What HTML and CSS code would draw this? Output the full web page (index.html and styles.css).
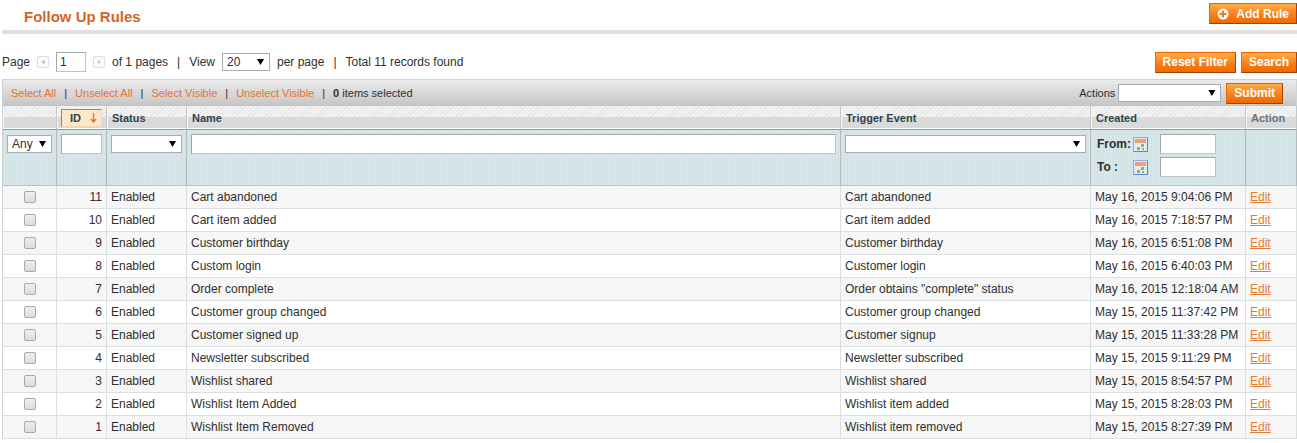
FILE: index.html
```html
<!DOCTYPE html>
<html lang="en">
<head>
    <meta charset="UTF-8">
    <meta name="viewport" content="width=device-width, initial-scale=1.0">
    <title>Follow Up Rules</title>
    <link rel="stylesheet" href="styles.css">
</head>
<body>
    <header class="content-header">
        <h1>Follow Up Rules</h1>
        <button type="button" class="button add">
            <svg width="12" height="12" viewBox="0 0 12 12" aria-hidden="true">
                <circle cx="6" cy="6" r="5.5" fill="#fff"/>
                <path d="M6 2.5v7M2.5 6h7" stroke="#f27a1c" stroke-width="2"/>
            </svg>
            Add Rule
        </button>
    </header>

    <div class="toolbar">
        <div class="pager">
            <label for="page">Page</label>
            <button type="button" class="arrow prev" aria-label="Previous page" disabled></button>
            <input type="text" id="page" class="page-input" value="1">
            <button type="button" class="arrow next" aria-label="Next page" disabled></button>
            <span class="pages">of 1 pages</span>
            <span class="separator">|</span>
            <label for="limit">View</label>
            <span class="select limit"><select id="limit"><option>20</option><option>30</option><option>50</option></select></span>
            <span>per page</span>
            <span class="separator last">|</span>
            <span>Total 11 records found</span>
        </div>
        <div class="filter-actions">
            <button type="button" class="button">Reset Filter</button>
            <button type="button" class="button">Search</button>
        </div>
    </div>

    <div class="massaction">
        <div class="mass-links">
            <a href="#">Select All</a>
            <span>|</span>
            <a href="#">Unselect All</a>
            <span>|</span>
            <a href="#">Select Visible</a>
            <span>|</span>
            <a href="#">Unselect Visible</a>
            <span>|</span>
            <span class="selected"><b>0</b> items selected</span>
        </div>
        <div class="mass-submit">
            <label for="actions">Actions</label>
            <span class="select actions"><select id="actions"><option></option><option>Delete</option></select></span>
            <button type="button" class="button">Submit</button>
        </div>
    </div>

    <table class="grid">
        <colgroup>
            <col class="col-check">
            <col class="col-id">
            <col class="col-status">
            <col class="col-name">
            <col class="col-event">
            <col class="col-created">
            <col class="col-action">
        </colgroup>
        <thead>
            <tr class="headings">
                <th></th>
                <th class="sorted"><a href="#">ID
                    <svg width="7" height="10" viewBox="0 0 7 10" aria-hidden="true"><path d="M3.5 0v9M1 6l2.5 3L6 6" fill="none" stroke="#e2711d" stroke-width="1.3"/></svg></a></th>
                <th>Status</th>
                <th>Name</th>
                <th>Trigger Event</th>
                <th>Created</th>
                <th class="no-link">Action</th>
            </tr>
            <tr class="filter">
                <td><span class="select"><select aria-label="Selected"><option>Any</option><option>Yes</option><option>No</option></select></span></td>
                <td><input type="text" aria-label="ID"></td>
                <td><span class="select"><select aria-label="Status"><option></option><option>Enabled</option><option>Disabled</option></select></span></td>
                <td><input type="text" aria-label="Name"></td>
                <td><span class="select"><select aria-label="Trigger Event"><option></option><option>Cart abandoned</option></select></span></td>
                <td>
                    <div class="range">
                        <label for="from">From:</label>
                        <svg width="15" height="15" viewBox="0 0 15 15" aria-hidden="true">
                            <rect x=".5" y=".5" width="14" height="14" fill="#dde8f8" stroke="#8fabdf"/>
                            <path d="M14.5 1v13.500H1" fill="none" stroke="#5c84cd"/>
                            <rect x="2" y="2" width="11" height="4" fill="#f0a070"/>
                            <rect x="3" y="6" width="9" height="7" fill="#e9eee6"/>
                            <path d="M8 7h3v3H8zM4 10h3v3H4zM9 11h2v2H9z" fill="#7fb58a"/>
                        </svg>
                        <input type="text" id="from">
                    </div>
                    <div class="range">
                        <label for="to">To :</label>
                        <svg width="15" height="15" viewBox="0 0 15 15" aria-hidden="true">
                            <rect x=".5" y=".5" width="14" height="14" fill="#dde8f8" stroke="#8fabdf"/>
                            <path d="M14.5 1v13.500H1" fill="none" stroke="#5c84cd"/>
                            <rect x="2" y="2" width="11" height="4" fill="#f0a070"/>
                            <rect x="3" y="6" width="9" height="7" fill="#e9eee6"/>
                            <path d="M8 7h3v3H8zM4 10h3v3H4zM9 11h2v2H9z" fill="#7fb58a"/>
                        </svg>
                        <input type="text" id="to">
                    </div>
                </td>
                <td></td>
            </tr>
        </thead>
        <tbody>
            <tr><td><input type="checkbox" aria-label="Rule 11"></td><td>11</td><td>Enabled</td><td>Cart abandoned</td><td>Cart abandoned</td><td>May 16, 2015 9:04:06 PM</td><td><a href="#">Edit</a></td></tr>
            <tr><td><input type="checkbox" aria-label="Rule 10"></td><td>10</td><td>Enabled</td><td>Cart item added</td><td>Cart item added</td><td>May 16, 2015 7:18:57 PM</td><td><a href="#">Edit</a></td></tr>
            <tr><td><input type="checkbox" aria-label="Rule 9"></td><td>9</td><td>Enabled</td><td>Customer birthday</td><td>Customer birthday</td><td>May 16, 2015 6:51:08 PM</td><td><a href="#">Edit</a></td></tr>
            <tr><td><input type="checkbox" aria-label="Rule 8"></td><td>8</td><td>Enabled</td><td>Custom login</td><td>Customer login</td><td>May 16, 2015 6:40:03 PM</td><td><a href="#">Edit</a></td></tr>
            <tr><td><input type="checkbox" aria-label="Rule 7"></td><td>7</td><td>Enabled</td><td>Order complete</td><td>Order obtains "complete" status</td><td>May 16, 2015 12:18:04 AM</td><td><a href="#">Edit</a></td></tr>
            <tr><td><input type="checkbox" aria-label="Rule 6"></td><td>6</td><td>Enabled</td><td>Customer group changed</td><td>Customer group changed</td><td>May 15, 2015 11:37:42 PM</td><td><a href="#">Edit</a></td></tr>
            <tr><td><input type="checkbox" aria-label="Rule 5"></td><td>5</td><td>Enabled</td><td>Customer signed up</td><td>Customer signup</td><td>May 15, 2015 11:33:28 PM</td><td><a href="#">Edit</a></td></tr>
            <tr><td><input type="checkbox" aria-label="Rule 4"></td><td>4</td><td>Enabled</td><td>Newsletter subscribed</td><td>Newsletter subscribed</td><td>May 15, 2015 9:11:29 PM</td><td><a href="#">Edit</a></td></tr>
            <tr><td><input type="checkbox" aria-label="Rule 3"></td><td>3</td><td>Enabled</td><td>Wishlist shared</td><td>Wishlist shared</td><td>May 15, 2015 8:54:57 PM</td><td><a href="#">Edit</a></td></tr>
            <tr><td><input type="checkbox" aria-label="Rule 2"></td><td>2</td><td>Enabled</td><td>Wishlist Item Added</td><td>Wishlist item added</td><td>May 15, 2015 8:28:03 PM</td><td><a href="#">Edit</a></td></tr>
            <tr><td><input type="checkbox" aria-label="Rule 1"></td><td>1</td><td>Enabled</td><td>Wishlist Item Removed</td><td>Wishlist item removed</td><td>May 15, 2015 8:27:39 PM</td><td><a href="#">Edit</a></td></tr>
        </tbody>
    </table>
</body>
</html>
```

FILE: styles.css
```css
* {
    box-sizing: border-box;
}
body {
    margin: 0;
    padding-left: 2px;
    background-color: #fff;
    color: #2f2f2f;
    font-family: "Liberation Sans", Arial, sans-serif;
    font-size: 12px;
    line-height: 16px;
}
input, select, button {
    margin: 0;
    font-family: inherit;
    font-size: 12px;
    color: inherit;
}
.content-header {
    display: flex;
    justify-content: space-between;
    align-items: flex-start;
    height: 34px;
    padding-top: 3px;
    border-bottom: 4px solid #dfdfdf;
}
.content-header h1 {
    margin: 4px 0 0 22px;
    color: #d5651f;
    font-size: 15px;
    line-height: 20px;
}
.button {
    height: 21px;
    padding: 0 7px;
    border: 1px solid;
    border-color: #ed6502 #a04300 #a04300 #ed6502;
    background: linear-gradient(#ffac47, #f77c16 60%, #ee6a00);
    color: #fff;
    font-weight: bold;
    line-height: 18px;
    white-space: nowrap;
    cursor: pointer;
}
.button.add {
    display: flex;
    align-items: center;
    gap: 7px;
}

/* pager and filter buttons */
.toolbar {
    display: flex;
    justify-content: space-between;
    align-items: center;
    height: 45px;
    padding-top: 11px;
}
.pager {
    display: flex;
    align-items: center;
    gap: 7px;
}
.arrow {
    display: flex;
    align-items: center;
    justify-content: center;
    width: 12px;
    height: 12px;
    padding: 0;
    border: 1px solid #ddd;
    border-radius: 2px;
    background-color: #fafafa;
}
.arrow::before {
    content: "";
    width: 3px;
    height: 5px;
    background-color: #bbb;
    clip-path: polygon(0 50%, 100% 0, 100% 100%);
}
.arrow.next::before {
    clip-path: polygon(100% 50%, 0 0, 0 100%);
}
.page-input {
    width: 30px;
}
.separator {
    padding: 0 2px;
}
input[type="text"] {
    height: 20px;
    padding: 0 3px;
    border: 1px solid;
    border-color: #a2a8a8 #bcc4c4 #bcc4c4 #a2a8a8;
    background-color: #fff;
}
.select {
    display: block;
    position: relative;
}
.select select {
    display: block;
    width: 100%;
    height: 18px;
    padding: 0 4px;
    border: 1px solid #a9adad;
    border-radius: 0;
    background-color: #fff;
    appearance: none;
}
.select::after {
    content: "";
    position: absolute;
    top: 6px;
    right: 6px;
    width: 7px;
    height: 6px;
    background-color: #000;
    clip-path: polygon(0 0, 100% 0, 50% 100%);
    pointer-events: none;
}
.limit {
    width: 48px;
}
.filter-actions {
    display: flex;
    gap: 5px;
}

/* mass actions */
.massaction {
    display: flex;
    justify-content: space-between;
    align-items: center;
    height: 27px;
    padding: 0 13px 0 8px;
    border: 1px solid #cfd3d3;
    border-bottom: 0;
    background: linear-gradient(#ebebeb, #c4c4c4);
    font-size: 11px;
}
.mass-links {
    display: flex;
    gap: 8px;
}
.mass-links a {
    color: #e8722a;
    text-decoration: none;
}
.mass-submit {
    display: flex;
    align-items: center;
}
.actions {
    width: 103px;
    margin: 0 5px 0 3px;
}

/* grid */
.grid {
    width: 100%;
    border-collapse: separate;
    border-spacing: 0;
    border-left: 1px solid #cbd3d4;
    table-layout: fixed;
}
.col-check { width: 54px; }
.col-id { width: 50px; }
.col-status { width: 80px; }
.col-event { width: 250px; }
.col-created { width: 155px; }
.col-action { width: 51px; }
.grid th,
.grid td {
    padding: 0 4px;
    border-right: 1px solid #dadfe0;
    text-align: left;
}
.headings th {
    height: 24px;
    padding-left: 5px;
    border-bottom: 1px solid #8f9a9a;
    border-right-color: #c5c9c9;
    background: linear-gradient(transparent 11px, #dadada 11px, #dadada 22px, #fff 22px),
        repeating-linear-gradient(135deg, #f3f3f3 0, #f3f3f3 2px, #e5e5e5 2px, #e5e5e5 3px);
    color: #2d444f;
    font-size: 11px;
    box-shadow: inset 1px 0 #f6f6f6;
}
.headings .no-link {
    color: #67767e;
}
.headings .sorted {
    padding: 0 4px;
}
.sorted a {
    display: flex;
    align-items: center;
    justify-content: space-between;
    height: 18px;
    padding: 0 4px 0 8px;
    border: 1px solid;
    border-color: #9d8b77 #f5d6b2 #f5d6b2 #9d8b77;
    background: repeating-linear-gradient(135deg, #fdebd2 0, #fdebd2 2px, #f9dcb8 2px, #f9dcb8 3px);
    color: inherit;
    text-decoration: none;
}
.filter td {
    height: 56px;
    padding-top: 4px;
    border-bottom: 1px solid #b5c3c4;
    border-right-color: #b3bdbd;
    background:
        repeating-linear-gradient(90deg, rgba(190, 215, 217, .3) 0, rgba(190, 215, 217, .3) 1px, transparent 1px, transparent 3px),
        #d7e6e8;
    vertical-align: top;
}
.filter td > input {
    display: block;
    width: 100%;
}
.filter .select {
    margin-top: 1px;
}
.range {
    display: flex;
    align-items: center;
    margin-bottom: 3px;
    padding-left: 2px;
}
.range label {
    width: 36px;
    font-weight: bold;
    white-space: nowrap;
}
.range input {
    width: 56px;
    margin-left: 12px;
}
.grid tbody td {
    height: 23px;
    border-bottom: 1px solid #dadfe0;
    white-space: nowrap;
}
.grid tbody tr:nth-child(odd) {
    background-color: #f6f6f6;
}
.grid tbody td:first-child {
    text-align: center;
}
.grid tbody td:nth-child(2) {
    text-align: right;
}
.grid tbody a {
    color: #e67a2e;
}
input[type="checkbox"] {
    display: block;
    width: 12px;
    height: 12px;
    margin: 0 auto;
    border: 1px solid #aaa;
    border-radius: 2px;
    background: linear-gradient(#eee, #dcdcdc);
    appearance: none;
}
```
